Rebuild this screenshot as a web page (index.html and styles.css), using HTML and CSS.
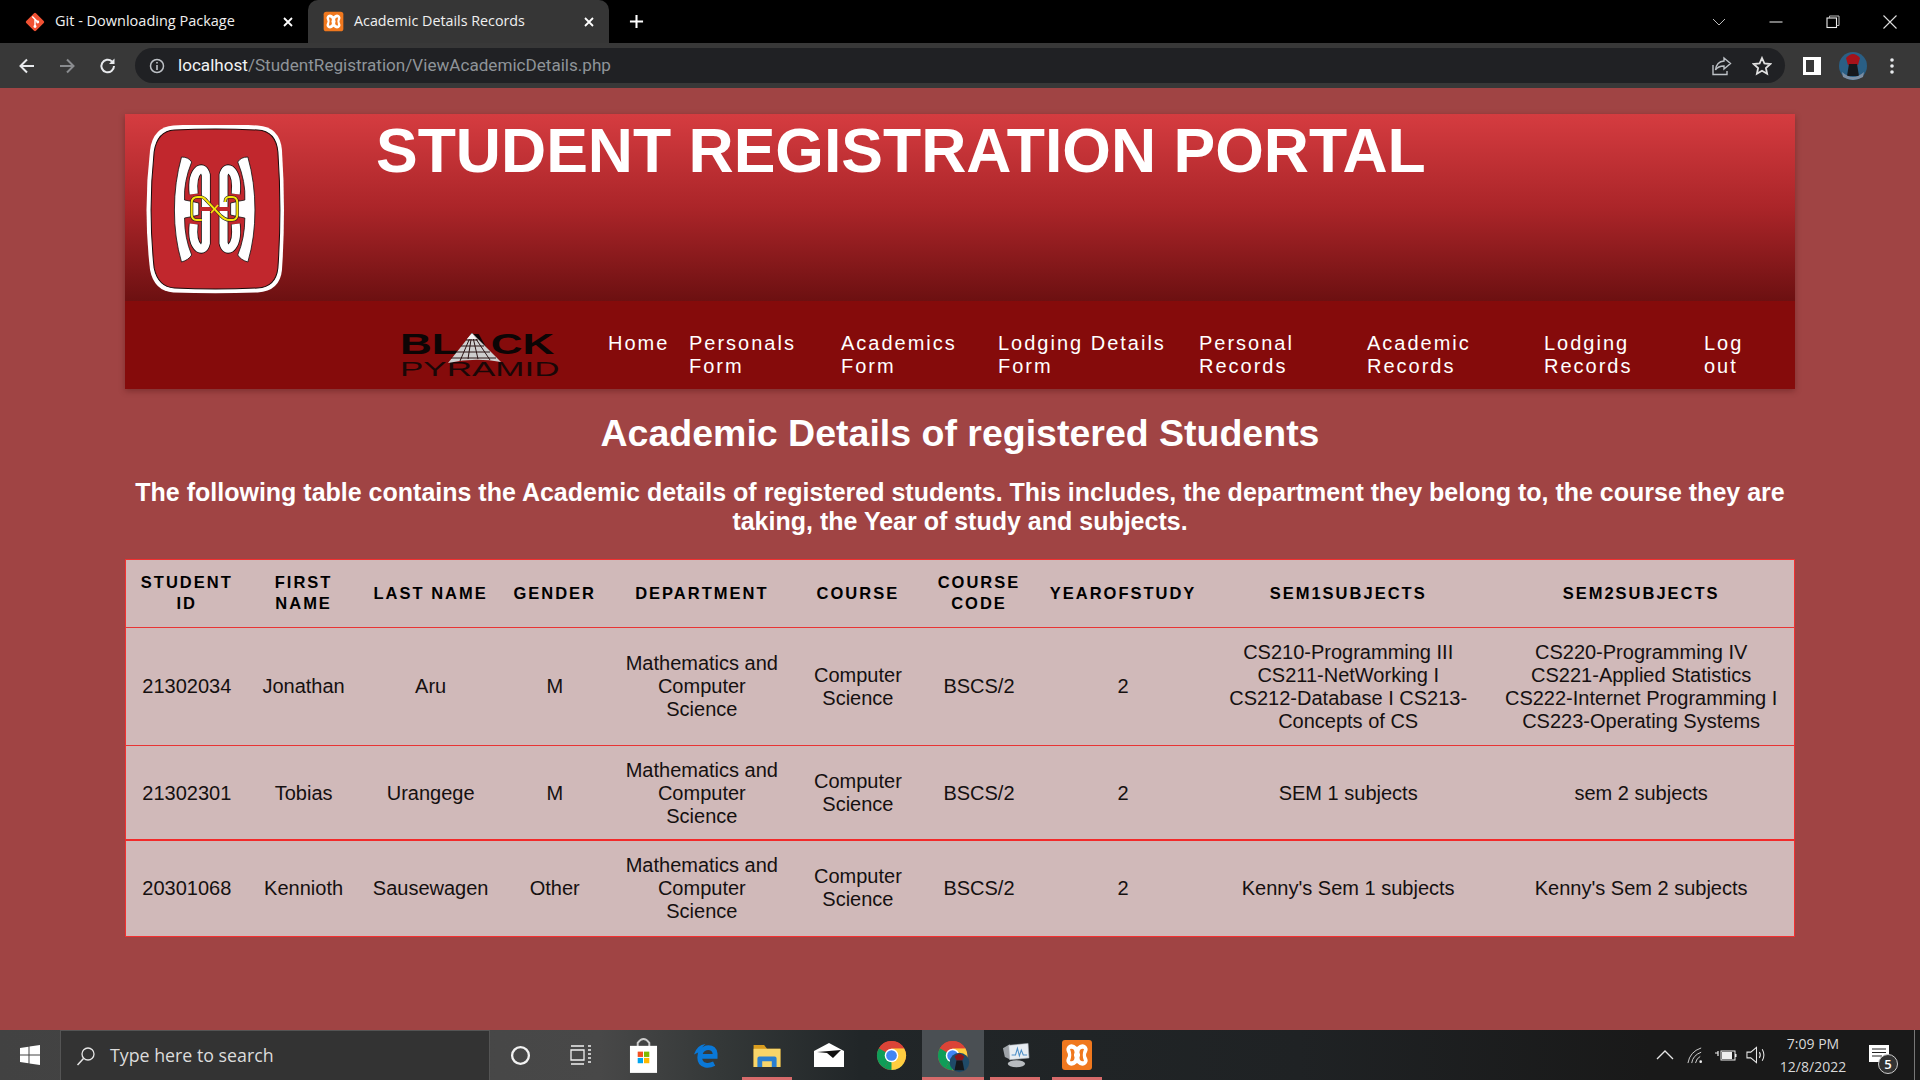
FILE: index.html
```html
<!DOCTYPE html>
<html lang="en">
<head>
<meta charset="utf-8">
<title>Academic Details Records</title>
<link rel="stylesheet" href="styles.css">
</head>
<body>
<svg class="defs" width="0" height="0" aria-hidden="true">
  <defs>
    <g id="chrome-logo">
      <circle cx="16" cy="16" r="15" fill="#db4437"/>
      <path d="M16 16 L29 23.500 A15 15 0 0 1 8.500 29 Z" fill="#0f9d58"/>
      <path d="M16 16 L3 8.500 A15 15 0 0 0 8.500 29 Z" fill="#0f9d58"/>
      <path d="M16 8.500 H29 A15 15 0 0 1 16 31 L16 16 Z" fill="#ffcd40"/>
      <path d="M3 8.500 A15 15 0 0 1 29 8.500 H16 Z" fill="#db4437"/>
      <circle cx="16" cy="16" r="7" fill="#fff"/>
      <circle cx="16" cy="16" r="5.500" fill="#4285f4"/>
    </g>
    <g id="xampp-mark">
      <path d="M8 6 Q12 4 16 8 Q20 4 24 6 Q28 9 26 13 Q24 16 26 19 Q28 23 24 26 Q20 28 16 24 Q12 28 8 26 Q4 23 6 19 Q8 16 6 13 Q4 9 8 6 Z" fill="#fff"/>
      <path d="M9 10 Q13 9 13.500 13 L13.500 19 Q13 23 9 22 Q11.500 16 9 10 Z" fill="#f0781e"/>
      <path d="M23 10 Q19 9 18.500 13 L18.500 19 Q19 23 23 22 Q20.500 16 23 10 Z" fill="#f0781e"/>
      <rect x="13" y="14.500" width="6" height="3" fill="#fff"/>
    </g>
    <g id="quarter">
      <path d="M67 87 L67 55 Q65 47 60 50 Q53 56 55 74" fill="none" stroke="#111" stroke-width="9.500"/>
      <path d="M67 87 L67 55 Q65 47 60 50 Q53 56 55 74" fill="none" stroke="#fff" stroke-width="8"/>
    </g>
    <g id="bracket">
      <path d="M43 37 Q50 37 53 42 Q45 62 46 80 Q52 81 60 83 L60 95 Q52 97 46 98 Q46 118 53 135 Q50 140 43 142 Q36 118 36 90 Q36 62 43 37 Z" fill="#fff" stroke="#111" stroke-width="0.8"/>
    </g>
  </defs>
</svg>

<header class="browser">
  <div class="tabstrip">
    <div class="tab">
      <svg class="favicon" viewBox="0 0 24 24"><rect x="4.500" y="4.500" width="15" height="15" rx="1.500" transform="rotate(45 12 12)" fill="#f05133"/><path d="M9 6 L15 12 M12 9 V17" stroke="#fff" stroke-width="1.600" fill="none"/><circle cx="12" cy="17" r="1.600" fill="#fff"/><circle cx="15" cy="12" r="1.600" fill="#fff"/></svg>
      <span class="tab-title">Git - Downloading Package</span>
      <svg class="tab-close" viewBox="0 0 12 12"><path d="M2 2 L10 10 M10 2 L2 10" stroke="#fff" stroke-width="1.800"/></svg>
    </div>
    <div class="tab tab-active">
      <svg class="favicon" viewBox="0 0 32 32"><rect x="1" y="1" width="30" height="30" rx="4" fill="#f0781e"/><use href="#xampp-mark"/></svg>
      <span class="tab-title">Academic Details Records</span>
      <svg class="tab-close" viewBox="0 0 12 12"><path d="M2 2 L10 10 M10 2 L2 10" stroke="#fff" stroke-width="1.800"/></svg>
    </div>
    <svg class="new-tab" viewBox="0 0 16 16"><path d="M8 1 V15 M1 8 H15" stroke="#fff" stroke-width="2.200"/></svg>
    <div class="window-controls">
      <span class="win-btn"><svg viewBox="0 0 14 14"><path d="M1 4 L7 10 L13 4" fill="none" stroke="#bbb"/></svg></span>
      <span class="win-btn"><svg viewBox="0 0 14 14"><path d="M0.500 7 H13.500" stroke="#ddd" stroke-width="1.100"/></svg></span>
      <span class="win-btn"><svg viewBox="0 0 14 14"><rect x="1" y="3" width="9.500" height="9.500" fill="none" stroke="#eee" stroke-width="1.100"/><path d="M3.500 3 V1 H13 V10.500 H10.500" fill="none" stroke="#bbb"/></svg></span>
      <span class="win-btn"><svg viewBox="0 0 14 14"><path d="M0.500 0.500 L13.500 13.500 M13.500 0.500 L0.500 13.500" stroke="#ddd" stroke-width="1.100"/></svg></span>
    </div>
  </div>
  <div class="toolbar">
    <svg class="tool tool-back" viewBox="0 0 18 18"><path d="M16 9 H3 M9 2.500 L2.500 9 L9 15.500" fill="none" stroke="#e8eaed" stroke-width="2"/></svg>
    <svg class="tool tool-fwd" viewBox="0 0 18 18"><path d="M2 9 H15 M9 2.500 L15.500 9 L9 15.500" fill="none" stroke="#8a8c8f" stroke-width="2"/></svg>
    <svg class="tool tool-reload" viewBox="0 0 18 18"><path d="M15 9 A6.300 6.300 0 1 1 13 4.400" fill="none" stroke="#e8eaed" stroke-width="2"/><path d="M15.500 1.500 V7 H10 Z" fill="#e8eaed"/></svg>
    <div class="omnibox">
      <svg class="info" viewBox="0 0 16 16"><circle cx="8" cy="8" r="6.500" fill="none" stroke="#bdc1c6" stroke-width="1.500"/><path d="M8 7 V12 M8 4 V5.600" stroke="#bdc1c6" stroke-width="1.600"/></svg>
      <span class="url"><span class="url-host">localhost</span>/StudentRegistration/ViewAcademicDetails.php</span>
      <svg class="omni-share" viewBox="0 0 20 20"><path d="M12 2 L18.500 7.500 L12 13 V10 Q6 10 3.500 14 Q4.500 5.500 12 5 Z" fill="none" stroke="#bdc1c6" stroke-width="1.400"/><path d="M1 9 V18.500 H15 V15" fill="none" stroke="#bdc1c6" stroke-width="1.400"/></svg>
      <svg class="omni-star" viewBox="0 0 20 20"><path d="M10 2 L12.400 7.400 L18.300 8 L13.900 12 L15.100 17.800 L10 14.800 L4.900 17.800 L6.100 12 L1.700 8 L7.600 7.400 Z" fill="none" stroke="#e0e0e0" stroke-width="1.800"/></svg>
    </div>
    <svg class="tool-panel" viewBox="0 0 18 18"><rect x="0" y="0" width="18" height="18" fill="#fff"/><rect x="3" y="3" width="8" height="12" fill="#383838"/></svg>
    <svg class="avatar" viewBox="0 0 28 28"><circle cx="14" cy="14" r="14" fill="#2a5f85"/><path d="M7 6 Q14 -2 21 6 L19 13 H9 Z" fill="#a5121a"/><path d="M10 12 H18 L20 24 H8 Z" fill="#15181c"/><path d="M3 20 Q14 30 25 20 L24 25 Q14 31 4 25 Z" fill="#7c8ea3"/></svg>
    <svg class="dots" viewBox="0 0 4 16"><circle cx="2" cy="2" r="1.800" fill="#e8eaed"/><circle cx="2" cy="8" r="1.800" fill="#e8eaed"/><circle cx="2" cy="14" r="1.800" fill="#e8eaed"/></svg>
  </div>
</header>

<main class="page">
  <section class="banner">
    <div class="banner-top">
      <svg class="logo" viewBox="8 5 137 169" preserveAspectRatio="none">
        <path d="M35 5.500 Q76 3 118 5.500 Q140 7 142 30 Q146 90 142 150 Q140 171 118 172.500 Q76 174 35 172.500 Q16 171 12 150 Q5 90 12 30 Q15 7 35 5.500 Z" fill="#fff"/>
        <path d="M36 10 Q76 8 118 10 Q136 11 138 32 Q142 90 138 148 Q136 167 118 168 Q76 170 36 168 Q20 167 16 148 Q10 90 16 32 Q19 11 36 10 Z" fill="#c1272d" stroke="#1a0a0a" stroke-width="1"/>
        <use href="#bracket"/>
        <use href="#bracket" transform="matrix(-1 0 0 1 151.400 0)"/>
        <use href="#quarter"/>
        <use href="#quarter" transform="matrix(-1 0 0 1 151.400 0)"/>
        <use href="#quarter" transform="matrix(1 0 0 -1 0 178)"/>
        <use href="#quarter" transform="matrix(-1 0 0 -1 151.400 178)"/>
        <path d="M63 100 L58 100 Q53 100 53 94 L53 83 Q53 77 59 77 L62 77 Q65 77 68 81 L82 96 Q86 100 90 100 L93 100 Q98 100 98 94 L98 83 Q98 77 93 77 L90 77 Q86 77 86 82" fill="none" stroke="#222" stroke-width="3.200"/>
        <path d="M63 100 L58 100 Q53 100 53 94 L53 83 Q53 77 59 77 L62 77 Q65 77 68 81 L82 96 Q86 100 90 100 L93 100 Q98 100 98 94 L98 83 Q98 77 93 77 L90 77 Q86 77 86 82" fill="none" stroke="#f5e60c" stroke-width="2"/>
        <path d="M72 93 L79 85" stroke="#f5e60c" stroke-width="1.500"/>
      </svg>
      <h1 class="portal-title">STUDENT REGISTRATION PORTAL</h1>
    </div>
    <nav class="banner-nav">
      <div class="pyramid">
        <span class="bp-black">BLACK</span>
        <span class="bp-pyramid">PYRAMID</span>
        <svg class="pyramid-mark" viewBox="0 0 56 32">
          <path d="M25 1 L1 31 Q28 25 54 30 Z" fill="#cfcfcf"/>
          <path d="M25 1 L13 29 M25 1 L21 27 M25 1 L31 27 M25 1 L43 28 M19 8 H31 M14 14 H37 M9 20 H43 M4 26 H49" stroke="#2a1515" stroke-width="1" fill="none"/>
          <path d="M25 1 L20 7 H30 Z" fill="#f4f4f4"/>
        </svg>
      </div>
      <ul class="nav-list">
        <li><a href="#">Home</a></li>
        <li><a href="#">Personals Form</a></li>
        <li><a href="#">Academics Form</a></li>
        <li><a href="#">Lodging Details Form</a></li>
        <li><a href="#">Personal Records</a></li>
        <li><a href="#">Academic Records</a></li>
        <li><a href="#">Lodging Records</a></li>
        <li><a href="#">Log out</a></li>
      </ul>
    </nav>
  </section>

  <h2 class="page-heading">Academic Details of registered Students</h2>
  <p class="page-intro">The following table contains the Academic details of registered students. This includes, the department they belong to, the course they are taking, the Year of study and subjects.</p>

  <table class="records">
    <colgroup>
      <col class="c1"><col class="c2"><col class="c3"><col class="c4"><col class="c5">
      <col class="c6"><col class="c7"><col class="c8"><col class="c9"><col class="c10">
    </colgroup>
    <thead>
      <tr>
        <th>STUDENT ID</th><th>FIRST NAME</th><th>LAST NAME</th><th>GENDER</th><th>DEPARTMENT</th>
        <th>COURSE</th><th>COURSE CODE</th><th>YEAROFSTUDY</th><th>SEM1SUBJECTS</th><th>SEM2SUBJECTS</th>
      </tr>
    </thead>
    <tbody>
      <tr>
        <td>21302034</td><td>Jonathan</td><td>Aru</td><td>M</td><td>Mathematics and Computer Science</td>
        <td>Computer Science</td><td>BSCS/2</td><td>2</td>
        <td class="sem1">CS210-Programming III CS211-NetWorking I CS212-Database I CS213-Concepts of CS</td>
        <td>CS220-Programming IV CS221-Applied Statistics CS222-Internet Programming I CS223-Operating Systems</td>
      </tr>
      <tr class="row-mid">
        <td>21302301</td><td>Tobias</td><td>Urangege</td><td>M</td><td>Mathematics and Computer Science</td>
        <td>Computer Science</td><td>BSCS/2</td><td>2</td>
        <td>SEM 1 subjects</td><td>sem 2 subjects</td>
      </tr>
      <tr class="row-thick">
        <td>20301068</td><td>Kennioth</td><td>Sausewagen</td><td>Other</td><td>Mathematics and Computer Science</td>
        <td>Computer Science</td><td>BSCS/2</td><td>2</td>
        <td>Kenny's Sem 1 subjects</td><td>Kenny's Sem 2 subjects</td>
      </tr>
    </tbody>
  </table>
</main>

<footer class="taskbar">
  <div class="start"><svg viewBox="0 0 20 20"><path d="M0 3 L8.500 1.800 V9.500 H0 Z M9.500 1.600 L20 0 V9.500 H9.500 Z M0 10.500 H8.500 V18.200 L0 17 Z M9.500 10.500 H20 V20 L9.500 18.400 Z" fill="#fff"/></svg></div>
  <div class="search">
    <svg class="search-icon" viewBox="0 0 20 20"><circle cx="12" cy="8" r="6" fill="none" stroke="#e6e6e6" stroke-width="1.300"/><path d="M7.500 12.500 L1.500 19" stroke="#e6e6e6" stroke-width="1.500"/></svg>
    <span class="search-text">Type here to search</span>
  </div>
  <div class="slot slot-first"><svg class="ic-cortana" viewBox="0 0 20 20"><circle cx="10" cy="10" r="8" fill="none" stroke="#f2f2f2" stroke-width="2.200"/></svg></div>
  <div class="slot"><svg class="ic-task" viewBox="0 0 22 22"><path d="M1 2 H14 M1 6 H14 V16 H1 Z M1 20 H14 M18 2 H21 M18 6 H21 M18 10 H21 M18 14 H21 M18 18 H21" fill="none" stroke="#f0f0f0" stroke-width="1.300"/></svg></div>
  <div class="slot"><svg class="ic-store" viewBox="0 0 30 38"><path d="M9 10 V6 Q15 -2 21 6 V10" fill="none" stroke="#ccc" stroke-width="2"/><rect x="1" y="9" width="28" height="28" fill="#fff"/><rect x="9" y="15" width="5.500" height="5.500" fill="#f25022"/><rect x="15.500" y="15" width="5.500" height="5.500" fill="#7fba00"/><rect x="9" y="21.500" width="5.500" height="5.500" fill="#00a4ef"/><rect x="15.500" y="21.500" width="5.500" height="5.500" fill="#ffb900"/></svg></div>
  <div class="slot"><svg class="ic-edge" viewBox="0 0 26 27"><path d="M22 22.500 Q17 25 13 24 Q7 22.500 7 16 Q7 8 14 6 Q22 5 23 12 V15 H7" fill="none" stroke="#0a78d7" stroke-width="5"/><path d="M1 13 Q4 3 13 2 Q9 5 7 10 Z" fill="#0a78d7"/></svg></div>
  <div class="slot slot-open"><svg class="ic-folder" viewBox="0 0 28 24"><path d="M0 1 H11 L14 5 H28 V24 H0 Z" fill="#d99c1e"/><path d="M0 5 H28 V24 H0 Z" fill="#f8d56a"/><path d="M4 24 V15 Q4 13 6 13 H22 Q24 13 24 15 V24 H19 V18 H9 V24 Z" fill="#2a7fd1"/></svg></div>
  <div class="slot"><svg class="ic-mail" viewBox="0 0 30 24"><path d="M15 0 L30 8 V24 H0 V8 Z" fill="#fff"/><path d="M3 9 L27 7 L19 15 L13 10 Z" fill="#111"/></svg></div>
  <div class="slot"><svg class="ic-chrome" viewBox="0 0 32 32"><use href="#chrome-logo"/></svg></div>
  <div class="slot slot-active"><svg class="ic-chrome ic-chrome-user" viewBox="0 0 40 42"><use href="#chrome-logo"/><circle class="chrome-badge" cx="23" cy="23" r="10"/><path d="M18 17 Q23 11 28 17 L26 21 H20 Z" fill="#8d1418"/><path d="M20 21 H26 L28 31 H18 Z" fill="#15181c"/></svg></div>
  <div class="slot slot-open"><svg class="ic-monitor" viewBox="0 0 30 26"><path d="M2 6 L9 2 L10 18 L4 15 Z" fill="#9ea3a8"/><path d="M8 3 L28 1 L29 16 L9 18 Z" fill="#e8edf2" stroke="#a8adb2" stroke-width=".6"/><path d="M11 13 L15 13 L17 6 L19 14 L21 8 L23 13 H27" fill="none" stroke="#4d8fc7" stroke-width="1.100"/><ellipse cx="16" cy="22" rx="9" ry="3.600" fill="#b8bcc0"/></svg></div>
  <div class="slot slot-open"><svg class="ic-xampp" viewBox="1 1 30 30"><rect x="1" y="1" width="30" height="30" rx="3" fill="#f0781e"/><use href="#xampp-mark"/></svg></div>
  <div class="tray">
    <svg class="tr-chev" viewBox="0 0 18 10"><path d="M1 9 L9 1 L17 9" fill="none" stroke="#e6e6e6" stroke-width="1.300"/></svg>
    <svg class="tr-wifi" viewBox="0 0 18 18"><path d="M1 17 Q3 5 15 1 M5 17 Q6 9 15 5.500 M9 17 Q10 12 14 10" fill="none" stroke="#d8d8d8" stroke-width="1"/><circle cx="14.500" cy="15.500" r="1.400" fill="#eee"/></svg>
    <svg class="tr-batt" viewBox="0 0 22 12"><path d="M0 4 H3 M3 2 V7" stroke="#eee" stroke-width="1.200"/><rect x="6" y="2" width="14" height="9" fill="none" stroke="#eee"/><rect x="7" y="3" width="10" height="7" fill="#eee"/><rect x="20" y="5" width="1.500" height="3" fill="#eee"/></svg>
    <svg class="tr-vol" viewBox="0 0 22 20"><path d="M1 7 H5 L11 2 V18 L5 13 H1 Z" fill="none" stroke="#e6e6e6" stroke-width="1.100"/><path d="M14 7 Q16 10 14 13 M17 4 Q20.500 10 17 16" fill="none" stroke="#e6e6e6" stroke-width="1.100"/></svg>
    <div class="clock"><span>7:09 PM</span><span>12/8/2022</span></div>
    <div class="notify">
      <svg class="note" viewBox="0 0 20 17"><path d="M0 0 H20 V17 H0 Z" fill="#fff"/><path d="M3 4 H17 M3 7.500 H17 M3 11 H13" stroke="#222" stroke-width="1"/></svg>
      <span class="note-badge">5</span>
    </div>
    <span class="show-desktop"></span>
  </div>
</footer>
</body>
</html>
```

FILE: styles.css
```css
* { box-sizing: border-box; }

html, body { margin: 0; padding: 0; height: 100%; }

body {
  display: flex;
  flex-direction: column;
  height: 1080px;
  overflow: hidden;
  font-family: "Liberation Sans", Arial, sans-serif;
  background: #a04444;
  color: #000;
}

.defs { position: absolute; }

/* browser chrome */
.browser { flex: none; height: 88px; font-family: "Open Sans", "Noto Sans", sans-serif; }

.tabstrip {
  display: flex;
  align-items: center;
  height: 43px;
  background: #000;
}

.tab {
  display: flex;
  align-items: center;
  width: 308px;
  height: 43px;
  padding: 0 14px 0 24px;
  color: #f0f0f0;
}

.tab-active {
  width: 301px;
  padding-left: 15px;
  background: #363636;
  border-radius: 10px 10px 0 0;
}

.favicon { width: 22px; height: 22px; flex: none; }
.tab-active .favicon { width: 21px; height: 21px; }

.tab-title {
  flex: 1;
  margin: -2px 0 0 9px;
  font-size: 14.500px;
  white-space: nowrap;
}
.tab-active .tab-title { margin-left: 10px; font-size: 14.300px; }

.tab-close { width: 12px; height: 12px; flex: none; }

.new-tab { width: 15px; height: 15px; margin-left: 20px; }

.window-controls { display: flex; margin-left: auto; padding-right: 2px; }
.win-btn { display: flex; width: 57px; height: 36px; align-items: center; justify-content: center; }
.win-btn svg { width: 14px; height: 14px; }

.toolbar {
  display: flex;
  align-items: center;
  height: 45px;
  background: #383838;
}

.tool { width: 18px; height: 18px; flex: none; }
.tool-back { margin-left: 18px; }
.tool-fwd { margin-left: 22px; }
.tool-reload { margin-left: 23px; }

.omnibox {
  display: flex;
  align-items: center;
  width: 1650px;
  height: 35px;
  margin-left: 18px;
  padding: 0 10px 0 14px;
  background: #202124;
  border-radius: 18px;
}

.info { width: 16px; height: 16px; flex: none; }

.url {
  margin: -1px 0 0 13px;
  font-family: "Roboto", "Open Sans", sans-serif;
  font-size: 17.100px;
  color: #8f9499;
  white-space: nowrap;
}
.url-host { color: #f1f3f4; }

.omni-share { width: 20px; height: 20px; margin-left: auto; }
.omni-star { width: 20px; height: 20px; margin-left: 20px; margin-right: 3px; }

.tool-panel { width: 18px; height: 18px; margin-left: 18px; flex: none; }
.avatar { width: 28px; height: 28px; margin-left: 18px; flex: none; }
.dots { width: 4px; height: 16px; margin-left: 23px; flex: none; }

/* page */
.page {
  flex: 1;
  padding: 26px 125px 0;
  background: #a04444;
}

.banner { height: 275px; box-shadow: 0 2px 6px rgba(60, 10, 10, .35); }

.banner-top {
  display: flex;
  height: 187px;
  padding: 11px 0 0 21px;
  background: linear-gradient(#d53c40 0%, #ab2529 50%, #6c1011 100%);
}

.logo { width: 139px; height: 169px; flex: none; }

.portal-title {
  margin: -11px 0 0 91px;
  font-size: 62.500px;
  line-height: 72px;
  font-weight: 700;
  color: #fff;
  white-space: nowrap;
}

.banner-nav {
  display: flex;
  align-items: flex-start;
  height: 88px;
  padding-left: 275px;
  background: #850b0b;
}

.pyramid {
  position: relative;
  display: flex;
  flex-direction: column;
  width: 160px;
  flex: none;
  margin-top: 29px;
  color: #0c0505;
}

.bp-black {
  height: 29px;
  font-size: 30px;
  line-height: 28px;
  font-weight: 700;
  transform: scaleX(1.470);
  transform-origin: left center;
}

.bp-pyramid {
  height: 20px;
  font-size: 20px;
  line-height: 20px;
  transform: scaleX(1.750);
  transform-origin: left center;
  color: #1a0707;
}

.pyramid-mark {
  position: absolute;
  left: 47px;
  top: 2px;
  width: 56px;
  height: 32px;
}

.nav-list {
  display: grid;
  grid-template-columns: 81px 152px 157px 201px 168px 177px 160px 60px;
  margin: 31px 0 0 48px;
  padding: 0;
  list-style: none;
}

.nav-list a {
  display: block;
  font-size: 20px;
  line-height: 23px;
  letter-spacing: 2px;
  color: #fff;
  text-decoration: none;
}

.page-heading {
  margin: 23px 0 0;
  font-size: 37.500px;
  line-height: 42px;
  text-align: center;
  color: #fff;
}

.page-intro {
  margin: 24px 0 0;
  font-size: 25px;
  line-height: 29px;
  font-weight: 700;
  text-align: center;
  color: #fff;
}

/* table */
.records {
  width: 1670px;
  margin-top: 23px;
  table-layout: fixed;
  border-collapse: collapse;
  background: #d0b9b9;
  border: 1px solid #f23030;
  color: #151010;
}

.c1 { width: 122px; }
.c2 { width: 112px; }
.c3 { width: 142px; }
.c4 { width: 106px; }
.c5 { width: 188px; }
.c6 { width: 124px; }
.c7 { width: 118px; }
.c8 { width: 170px; }
.c9 { width: 280px; }
.c10 { width: 306px; }

.records th {
  padding: 12px 10px 13px;
  font-size: 16.500px;
  line-height: 21px;
  letter-spacing: 2px;
  font-weight: 700;
  text-align: center;
  color: #000;
  border-bottom: 1px solid #e83434;
}

.records td {
  padding: 12.500px 12px;
  font-size: 20px;
  line-height: 23px;
  text-align: center;
  border-bottom: 1px solid #e83434;
}

.records .sem1 { padding-left: 20px; padding-right: 20px; }

.records .row-mid td { padding-bottom: 11.500px; }

.records .row-thick td { padding-bottom: 13.500px; border-top: 2px solid #f22a2a; border-bottom: 0; }

/* taskbar */
.taskbar {
  display: flex;
  align-items: stretch;
  flex: none;
  height: 50px;
  background: linear-gradient(90deg, #424242 0, #484848 600px, #343838 720px, #212628 860px, #1f2224 1300px, #191919 1650px);
  font-family: "Open Sans", "Noto Sans", sans-serif;
}

.start { display: flex; width: 60px; align-items: center; justify-content: center; }
.start svg { width: 20px; height: 20px; }

.search {
  display: flex;
  align-items: center;
  width: 430px;
  padding-left: 15px;
  background: #333;
  border: 1px solid #545454;
  border-bottom: 0;
}
.search-icon { width: 20px; height: 20px; flex: none; }
.search-text { margin: -2px 0 0 14px; font-size: 17.800px; color: #dcdcdc; white-space: nowrap; }

.slot {
  position: relative;
  display: flex;
  width: 62px;
  align-items: center;
  justify-content: center;
}
.slot-first { width: 60px; }

.slot-active { background: #4a4f53; }
.slot-active::after, .slot-open::after {
  content: "";
  position: absolute;
  left: 6px;
  right: 6px;
  bottom: 0;
  height: 3px;
  background: #d66a6a;
}
.slot-active::after { left: 0; right: 0; }

.ic-cortana { width: 21px; height: 21px; }
.ic-task { width: 22px; height: 22px; }
.ic-store { width: 29px; height: 37px; }
.ic-edge { width: 25px; height: 26px; }
.ic-folder { width: 28px; height: 23px; }
.ic-mail { width: 30px; height: 24px; }
.ic-chrome { width: 31px; height: 31px; }
.ic-chrome-user { width: 39px; height: 41px; margin: 10px 0 0 7px; }
.chrome-badge { fill: #1f4a68; }
.ic-monitor { width: 29px; height: 26px; }
.ic-xampp { width: 30px; height: 32px; }

.tray { display: flex; flex: 1; align-items: center; justify-content: flex-end; }
.tr-chev { width: 18px; height: 10px; }
.tr-wifi { width: 17px; height: 17px; margin-left: 13px; }
.tr-batt { width: 22px; height: 12px; margin-left: 11px; }
.tr-vol { width: 21px; height: 20px; margin-left: 9px; }

.clock {
  display: flex;
  flex-direction: column;
  width: 80px;
  margin-left: 6px;
  align-items: center;
  font-size: 14px;
  line-height: 23px;
  color: #d8d8d8;
}

.notify { position: relative; width: 46px; height: 50px; margin-left: 15px; }
.note { width: 20px; height: 17px; display: block; margin: 15px 0 0 1px; }
.note-badge {
  position: absolute;
  left: 10px;
  top: 24px;
  width: 20px;
  height: 20px;
  border: 1px solid #ccc;
  border-radius: 50%;
  background: #333;
  color: #fff;
  font-size: 13px;
  font-weight: 600;
  line-height: 18px;
  text-align: center;
}

.show-desktop { width: 6px; height: 50px; border-left: 1px solid #777; }
```
